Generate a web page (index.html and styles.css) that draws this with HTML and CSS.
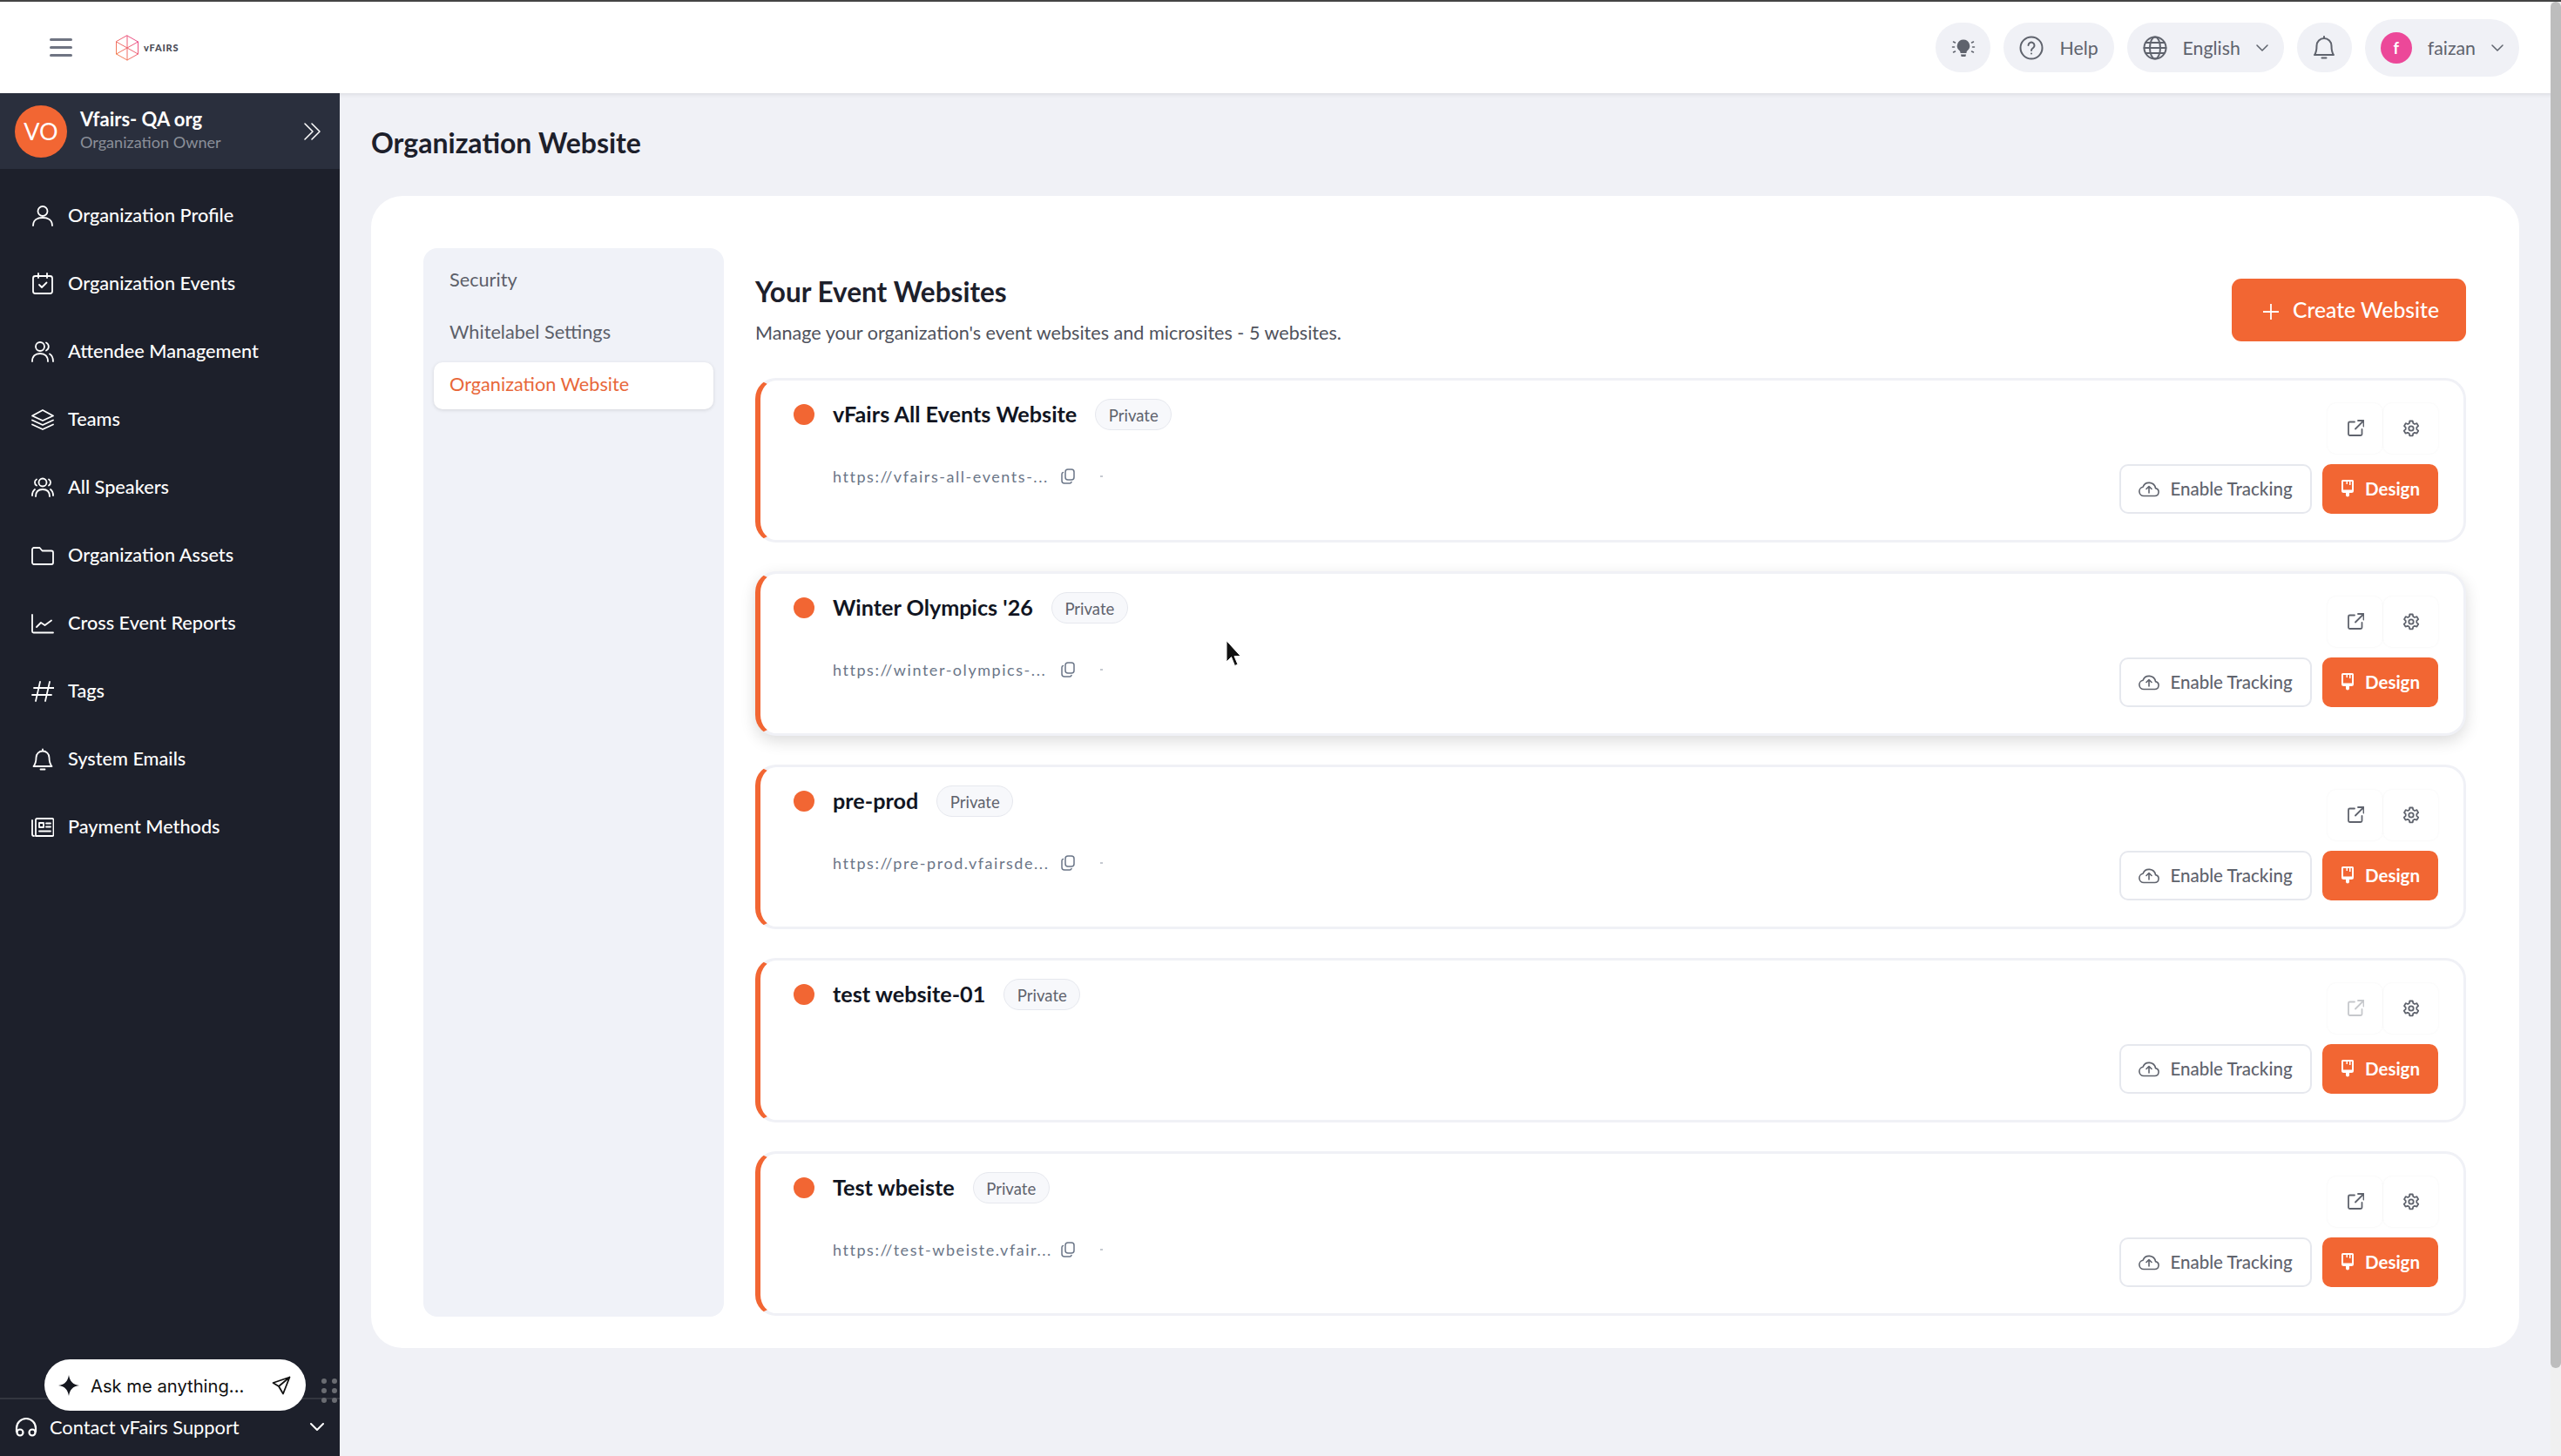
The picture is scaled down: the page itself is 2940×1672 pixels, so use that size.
FILE: index.html
```html
<!DOCTYPE html>
<html lang="en">
<head>
    <meta charset="UTF-8">
    <title>Organization Website</title>
    <link rel="stylesheet" href="styles.css">
</head>
<body>

<svg class="defs" width="0" height="0">
    <defs>
        <linearGradient id="logo-grad" x1="0" y1="1" x2="1" y2="0">
            <stop offset="0" stop-color="#f58a4b"/>
            <stop offset="1" stop-color="#e8428f"/>
        </linearGradient>
        <symbol id="i-external" viewBox="0 0 20 20">
            <path d="M9 2.500H3.500a1.500 1.500 0 0 0-1.500 1.500v12.500A1.500 1.500 0 0 0 3.500 18H16a1.500 1.500 0 0 0 1.500-1.500V11M10 10.500 19 1.500M13 1h6.500v6.500"/>
        </symbol>
        <symbol id="i-gear" viewBox="0 0 20 20">
            <path d="M8.300 1.500h3.400l.6 2.500 1.700 1 2.500-.8 1.700 2.900-1.900 1.800v2l1.900 1.800-1.700 2.900-2.500-.8-1.700 1-.6 2.500H8.300l-.6-2.500-1.700-1-2.500.8-1.700-2.900 1.900-1.800v-2L2 7.100l1.700-2.900 2.500.8 1.700-1z"/>
            <circle cx="10" cy="10" r="2.700"/>
        </symbol>
        <symbol id="i-cloud" viewBox="0 0 24 20">
            <path d="M6 18.500h12.500a4.500 4.500 0 0 0 1-8.900 7.500 7.500 0 0 0-14.400-1.400A5.200 5.200 0 0 0 6 18.500zM12 15V8M9 10.500 12 7.500l3 3"/>
        </symbol>
        <symbol id="i-brush" viewBox="0 0 16 20">
            <path fill-rule="evenodd" d="M2.500 0h11A1.500 1.500 0 0 1 15 1.500v11a2.500 2.500 0 0 1-2.500 2.500H10v2.500a2 2 0 0 1-4 0V15H3.500A2.500 2.500 0 0 1 1 12.500v-11A1.500 1.500 0 0 1 2.500 0zM3 2v9.500h10V2h-1.500v4h-1.500V2H8v3H6.500V2z"/>
        </symbol>
        <symbol id="i-copy" viewBox="0 0 16 18">
            <rect x="5" y="1" width="10" height="12" rx="3"/>
            <path d="M2.500 4.500A2 2 0 0 0 1 6.500V14a3 3 0 0 0 3 3h6a2 2 0 0 0 2-1.500"/>
        </symbol>
    </defs>
</svg>

<header class="topbar">
    <svg class="burger" viewBox="0 0 26 23">
        <path d="M1.500 2.500h23M1.500 11.500h23M1.500 20.500h23"/>
    </svg>
    <div class="logo">
        <svg viewBox="0 0 28 30" class="logo-mark">
            <path d="M14 1 26.500 8v14L14 29 1.500 22V8zM1.500 8 26.500 22M26.500 8 1.500 22M14 1v28"/>
        </svg>
        <span class="logo-text">vFAIRS</span>
    </div>
    <div class="top-actions">
        <div class="pill pill-round">
            <svg class="pill-icon" viewBox="0 0 28 28">
                <path class="solid" d="M14 4.500a7.200 7.200 0 0 0-4.500 12.800c.8.700 1 1.500 1 2.700h7c0-1.200.2-2 1-2.700A7.200 7.200 0 0 0 14 4.500zM11 21.500h6l-.6 2.500h-4.800z"/>
                <path d="M2.500 7l2 1M25.500 7l-2 1M1.500 13h2M26.500 13h-2M2.500 19l2-1M25.500 19l-2-1" class="dash"/>
            </svg>
        </div>
        <div class="pill">
            <svg class="pill-icon" viewBox="0 0 28 28">
                <circle cx="14" cy="14" r="12.500"/>
                <path d="M10.500 11a3.500 3.500 0 1 1 5.500 3c-1.300.9-2 1.500-2 3"/>
                <circle class="solid" cx="14" cy="20.500" r="1"/>
            </svg>
            <span>Help</span>
        </div>
        <div class="pill">
            <svg class="pill-icon" viewBox="0 0 28 28">
                <circle cx="14" cy="14" r="12.500"/>
                <ellipse cx="14" cy="14" rx="6" ry="12.500"/>
                <path d="M1.500 14h25M3.500 8h21M3.500 20h21"/>
            </svg>
            <span>English</span>
            <svg class="pill-caret" viewBox="0 0 14 8"><path d="M1 1l6 6 6-6"/></svg>
        </div>
        <div class="pill pill-round">
            <svg class="pill-icon" viewBox="0 0 28 28">
                <path d="M14 3a8.500 8.500 0 0 0-8.500 8.500c0 5.500-.5 8-2.500 10.500h22c-2-2.500-2.500-5-2.500-10.500A8.500 8.500 0 0 0 14 3zM14 3V1M11.500 25.500h5"/>
            </svg>
        </div>
        <div class="pill pill-user">
            <div class="user-avatar">f</div>
            <span>faizan</span>
            <svg class="pill-caret" viewBox="0 0 14 8"><path d="M1 1l6 6 6-6"/></svg>
        </div>
    </div>
</header>

<div class="layout">
    <aside class="sidebar">
        <div class="org">
            <div class="org-avatar">VO</div>
            <div class="org-info">
                <div class="org-name">Vfairs- QA org</div>
                <div class="org-role">Organization Owner</div>
            </div>
            <svg class="org-toggle" viewBox="0 0 19 20"><path d="M1 1l9 9-9 9M9 1l9 9-9 9"/></svg>
        </div>

        <ul class="nav">
            <li>
                <svg viewBox="0 0 26 26"><circle cx="13" cy="7.500" r="5.500"/><path d="M2 24c0-6 4.500-9 11-9s11 3 11 9"/></svg>
                Organization Profile
            </li>
            <li>
                <svg viewBox="0 0 26 26"><rect x="2" y="4" width="22" height="20" rx="2.500"/><path d="M8 1v5M18 1v5M9 14l3 3 5.500-5.500"/></svg>
                Organization Events
            </li>
            <li>
                <svg viewBox="0 0 26 26"><circle cx="10" cy="7" r="5"/><path d="M1 24c0-6 3.500-9 9-9s9 3 9 9M17 2.500a5 5 0 0 1 0 9M21 15.500c2.500 1.500 4 4.500 4 8.500"/></svg>
                Attendee Management
            </li>
            <li>
                <svg viewBox="0 0 26 26"><path d="M13 2 25 8.500 13 14 1 8.500zM1 13.500 13 19l12-5.500M1 18.500 13 24l12-5.500"/></svg>
                Teams
            </li>
            <li>
                <svg viewBox="0 0 26 26"><circle cx="13" cy="7" r="4.500"/><path d="M5 23c0-5 3-8 8-8s8 3 8 8M6 3.500a4 4 0 0 0 0 7M20 3.500a4 4 0 0 1 0 7M1 22c0-3 1-5.500 3-7M25 22c0-3-1-5.500-3-7"/></svg>
                All Speakers
            </li>
            <li>
                <svg viewBox="0 0 26 26"><path d="M1 6a2 2 0 0 1 2-2h6.500l3 3.500H23a2 2 0 0 1 2 2V21a2 2 0 0 1-2 2H3a2 2 0 0 1-2-2z"/></svg>
                Organization Assets
            </li>
            <li>
                <svg viewBox="0 0 26 26"><path d="M1 3v19a1.500 1.500 0 0 0 1.500 1.500H25M6 17l5-5 4.500 3L23 9.500"/></svg>
                Cross Event Reports
            </li>
            <li>
                <svg viewBox="0 0 26 26"><path d="M10 2 5 24M21 2l-5 22M3 9h23M1 17h22"/></svg>
                Tags
            </li>
            <li>
                <svg viewBox="0 0 26 26"><path d="M13 3.500a7.500 7.500 0 0 0-7.500 7.500c0 5-1 7.500-3 10h21c-2-2.500-3-5-3-10A7.500 7.500 0 0 0 13 3.500zM13 3.500V1.500M10.500 24.500h5"/></svg>
                System Emails
            </li>
            <li>
                <svg viewBox="0 0 26 26"><path d="M1 5v16a2 2 0 0 0 2 2M5 23h19a1.500 1.500 0 0 0 1.500-1.500V4.500A1.500 1.500 0 0 0 24 3H6.500A1.500 1.500 0 0 0 5 4.500zM9 8h5v5H9zM17 8.500h5M17 12.500h5M9 17.500h13"/></svg>
                Payment Methods
            </li>
        </ul>

        <div class="support">
            <svg class="support-icon" viewBox="0 0 26 24"><path d="M2 17v-4a11 11 0 0 1 22 0v4"/><circle cx="6" cy="18" r="3.500"/><circle cx="20" cy="18" r="3.500"/></svg>
            <span>Contact vFairs Support</span>
            <svg class="support-caret" viewBox="0 0 16 10"><path d="M1 1l7 7 7-7"/></svg>
        </div>

        <div class="ask">
            <svg class="ask-star" viewBox="0 0 24 24"><path d="M12 0c1.200 7.500 4.500 10.800 12 12-7.500 1.200-10.800 4.500-12 12-1.200-7.500-4.500-10.800-12-12 7.500-1.200 10.800-4.500 12-12z"/></svg>
            <span>Ask me anything...</span>
            <svg class="ask-send" viewBox="0 0 22 22"><path d="M20.500 1.500 1.500 8l6.500 4 5 8.500zM8 12l12.500-10.500"/></svg>
        </div>
        <div class="ask-grip">
            <i></i><i></i><i></i><i></i><i></i><i></i>
        </div>
    </aside>

    <main class="main">
        <h1 class="page-title">Organization Website</h1>
        <section class="panel">
            <ul class="subnav">
                <li>Security</li>
                <li>Whitelabel Settings</li>
                <li class="active">Organization Website</li>
            </ul>
            <div class="content">
                <div class="content-head">
                    <div>
                        <h2>Your Event Websites</h2>
                        <p>Manage your organization's event websites and microsites - 5 websites.</p>
                    </div>
                    <button class="btn-create">
                        <svg viewBox="0 0 18 18"><path d="M9 0v18M0 9h18"/></svg>
                        Create Website
                    </button>
                </div>

                <div class="card">
                    <div class="card-left">
                        <div class="card-title">
                            <span class="dot"></span>
                            <h3>vFairs All Events Website</h3>
                            <span class="badge">Private</span>
                        </div>
                        <div class="card-url">
                            <span class="url-text">https://vfairs-all-events-...</span>
                            <svg class="copy"><use href="#i-copy"/></svg>
                            <span class="url-dot"></span>
                        </div>
                    </div>
                    <div class="card-right">
                        <div class="icon-row">
                            <span class="icon-btn"><svg><use href="#i-external"/></svg></span>
                            <span class="icon-btn"><svg><use href="#i-gear"/></svg></span>
                        </div>
                        <div class="btn-row">
                            <button class="btn-track"><svg><use href="#i-cloud"/></svg>Enable Tracking</button>
                            <button class="btn-design"><svg><use href="#i-brush"/></svg>Design</button>
                        </div>
                    </div>
                </div>

                <div class="card card-hover">
                    <div class="card-left">
                        <div class="card-title">
                            <span class="dot"></span>
                            <h3>Winter Olympics '26</h3>
                            <span class="badge">Private</span>
                        </div>
                        <div class="card-url">
                            <span class="url-text">https://winter-olympics-...</span>
                            <svg class="copy"><use href="#i-copy"/></svg>
                            <span class="url-dot"></span>
                        </div>
                    </div>
                    <div class="card-right">
                        <div class="icon-row">
                            <span class="icon-btn"><svg><use href="#i-external"/></svg></span>
                            <span class="icon-btn"><svg><use href="#i-gear"/></svg></span>
                        </div>
                        <div class="btn-row">
                            <button class="btn-track"><svg><use href="#i-cloud"/></svg>Enable Tracking</button>
                            <button class="btn-design"><svg><use href="#i-brush"/></svg>Design</button>
                        </div>
                    </div>
                </div>

                <div class="card">
                    <div class="card-left">
                        <div class="card-title">
                            <span class="dot"></span>
                            <h3>pre-prod</h3>
                            <span class="badge">Private</span>
                        </div>
                        <div class="card-url">
                            <span class="url-text">https://pre-prod.vfairsde...</span>
                            <svg class="copy"><use href="#i-copy"/></svg>
                            <span class="url-dot"></span>
                        </div>
                    </div>
                    <div class="card-right">
                        <div class="icon-row">
                            <span class="icon-btn"><svg><use href="#i-external"/></svg></span>
                            <span class="icon-btn"><svg><use href="#i-gear"/></svg></span>
                        </div>
                        <div class="btn-row">
                            <button class="btn-track"><svg><use href="#i-cloud"/></svg>Enable Tracking</button>
                            <button class="btn-design"><svg><use href="#i-brush"/></svg>Design</button>
                        </div>
                    </div>
                </div>

                <div class="card">
                    <div class="card-left">
                        <div class="card-title">
                            <span class="dot"></span>
                            <h3>test website-01</h3>
                            <span class="badge">Private</span>
                        </div>
                    </div>
                    <div class="card-right">
                        <div class="icon-row">
                            <span class="icon-btn disabled"><svg><use href="#i-external"/></svg></span>
                            <span class="icon-btn"><svg><use href="#i-gear"/></svg></span>
                        </div>
                        <div class="btn-row">
                            <button class="btn-track"><svg><use href="#i-cloud"/></svg>Enable Tracking</button>
                            <button class="btn-design"><svg><use href="#i-brush"/></svg>Design</button>
                        </div>
                    </div>
                </div>

                <div class="card">
                    <div class="card-left">
                        <div class="card-title">
                            <span class="dot"></span>
                            <h3>Test wbeiste</h3>
                            <span class="badge">Private</span>
                        </div>
                        <div class="card-url">
                            <span class="url-text">https://test-wbeiste.vfair...</span>
                            <svg class="copy"><use href="#i-copy"/></svg>
                            <span class="url-dot"></span>
                        </div>
                    </div>
                    <div class="card-right">
                        <div class="icon-row">
                            <span class="icon-btn"><svg><use href="#i-external"/></svg></span>
                            <span class="icon-btn"><svg><use href="#i-gear"/></svg></span>
                        </div>
                        <div class="btn-row">
                            <button class="btn-track"><svg><use href="#i-cloud"/></svg>Enable Tracking</button>
                            <button class="btn-design"><svg><use href="#i-brush"/></svg>Design</button>
                        </div>
                    </div>
                </div>
            </div>
        </section>
    </main>
</div>

<div class="scroll-track"></div>
<div class="scroll-thumb"></div>

<svg class="cursor" viewBox="0 0 17 32">
    <path d="M1 1v24l5.500-5.500 4 10 3.500-1.500-4-9.500h7z"/>
</svg>

</body>
</html>
```

FILE: styles.css
```css
* {
    margin: 0;
    padding: 0;
    box-sizing: border-box;
}

ul {
    list-style: none;
}

html, body {
    height: 100%;
}

body {
    width: 2940px;
    height: 1672px;
    overflow: hidden;
    position: relative;
    background: #f0f1f6;
    font-family: "Lato", "Open Sans", sans-serif;
    color: #1d202b;
}

svg {
    fill: none;
    stroke: currentColor;
    stroke-linecap: round;
    stroke-linejoin: round;
    display: block;
    flex: none;
}

button {
    font-family: "Lato", sans-serif;
    border: none;
    cursor: pointer;
}

.defs {
    position: absolute;
}

/* top bar */
.topbar {
    height: 107px;
    border-top: 2px solid #444;
    background: #fff;
    display: flex;
    align-items: center;
    padding: 0 48px 0 57px;
    box-shadow: 0 2px 5px rgba(0, 0, 0, .08);
    position: relative;
    z-index: 1;
}

.burger {
    width: 26px;
    height: 23px;
    color: #6f7482;
    stroke-width: 3;
}

.logo {
    margin-left: 49px;
    display: flex;
    align-items: center;
    gap: 5px;
}

.logo-mark {
    width: 28px;
    height: 30px;
    stroke: url(#logo-grad);
    stroke-width: 1;
}

.logo-text {
    font-size: 11px;
    font-weight: 900;
    letter-spacing: .8px;
    color: #4a4d57;
}

.top-actions {
    margin-left: auto;
    display: flex;
    align-items: center;
    gap: 15px;
}

.pill {
    height: 57px;
    border-radius: 29px;
    background: #f0f1f6;
    display: flex;
    align-items: center;
    gap: 18px;
    padding: 0 18px;
    font-size: 21.300px;
    color: #5f636d;
}

.pill-round {
    width: 63px;
    justify-content: center;
    padding: 0;
}

.pill-icon {
    width: 28px;
    height: 28px;
    stroke-width: 2;
}

.solid {
    fill: currentColor;
    stroke: none;
}

.dash {
    stroke-width: 1.500;
}

.pill-caret {
    width: 14px;
    height: 8px;
    stroke-width: 1.500;
}

.pill-user {
    height: 66px;
    border-radius: 33px;
}

.user-avatar {
    width: 36px;
    height: 36px;
    border-radius: 50%;
    background: #ec4899;
    color: #fff;
    font-size: 18px;
    font-weight: 700;
    text-align: center;
    line-height: 36px;
}

/* sidebar */
.layout {
    display: flex;
    height: 1565px;
}

.sidebar {
    width: 390px;
    background: #1d202b;
    color: #fff;
    display: flex;
    flex-direction: column;
    position: relative;
    z-index: 2;
}

.org {
    height: 87px;
    background: #2a2f3d;
    display: flex;
    align-items: center;
    padding: 0 22px 0 17px;
    gap: 15px;
}

.org-avatar {
    width: 60px;
    height: 60px;
    border-radius: 50%;
    background: #f26633;
    font-size: 27px;
    text-align: center;
    line-height: 60px;
}

.org-info {
    margin-top: -2px;
}

.org-name {
    font-size: 22px;
    font-weight: 700;
    line-height: 26px;
}

.org-role {
    font-size: 18.100px;
    line-height: 26px;
    color: #8b8f99;
}

.org-toggle {
    width: 19px;
    height: 20px;
    margin-left: auto;
    stroke-width: 1.500;
}

.nav {
    padding-top: 15px;
}

.nav li {
    height: 78px;
    display: flex;
    align-items: center;
    gap: 16px;
    padding-left: 36px;
    padding-bottom: 2px;
    font-size: 21.700px;
    font-weight: 500;
}

.nav svg {
    width: 26px;
    height: 26px;
    stroke-width: 1.800;
    margin-top: 2px;
}

.support {
    margin-top: auto;
    height: 67px;
    border-top: 2px solid #33363f;
    display: flex;
    align-items: center;
    padding: 0 18px 2px 17px;
    font-size: 21.800px;
}

.support-icon {
    width: 26px;
    height: 24px;
    stroke-width: 2.200;
    margin-right: 14px;
}

.support-caret {
    width: 16px;
    height: 10px;
    margin-left: auto;
    stroke-width: 2;
}

.ask {
    position: absolute;
    left: 51px;
    top: 1454px;
    width: 300px;
    height: 59px;
    border-radius: 30px;
    background: #fff;
    color: #111;
    display: flex;
    align-items: center;
    padding: 0 17px 0 16px;
    font-family: "Inter", sans-serif;
    font-size: 20.200px;
}

.ask span {
    padding-top: 2px;
}

.ask-star {
    width: 24px;
    height: 24px;
    fill: #15171f;
    stroke: none;
    margin-right: 13px;
}

.ask-send {
    width: 22px;
    height: 22px;
    margin-left: auto;
    stroke-width: 1.800;
}

.ask-grip {
    position: absolute;
    left: 369px;
    top: 1476px;
    display: grid;
    grid-template-columns: 6px 6px;
    gap: 5px 6px;
}

.ask-grip i {
    width: 6px;
    height: 6px;
    border-radius: 50%;
    background: #6a6c72;
}

/* main */
.main {
    flex: 1;
    padding: 37px 48px 0 36px;
}

.page-title {
    font-size: 32px;
    font-weight: 700;
    line-height: 40px;
    color: #1d202b;
}

.panel {
    margin-top: 41px;
    height: 1323px;
    background: #fff;
    border-radius: 36px;
    padding: 60px 61px 36px 60px;
    display: flex;
    gap: 36px;
}

.subnav {
    width: 345px;
    background: #f0f2f8;
    border-radius: 16px;
    padding: 6px 12px;
    font-size: 21.700px;
    color: #5c5f69;
}

.subnav li {
    height: 60px;
    line-height: 60px;
    padding-left: 18px;
}

.subnav .active {
    height: 54px;
    line-height: 50px;
    margin-top: 5px;
    background: #fff;
    border-radius: 10px;
    color: #e8673a;
    box-shadow: 0 1px 4px rgba(0, 0, 0, .12);
}

.content {
    flex: 1;
    padding-top: 33px;
}

.content-head {
    display: flex;
    justify-content: space-between;
    align-items: flex-start;
    height: 116px;
}

.content-head h2 {
    font-size: 31.500px;
    font-weight: 700;
    line-height: 34px;
    color: #1d202b;
}

.content-head p {
    margin-top: 16px;
    font-size: 21.600px;
    line-height: 28px;
    color: #4f525c;
}

.btn-create {
    margin-top: 2px;
    width: 269px;
    height: 72px;
    padding: 0 0 2px 5px;
    background: #f26633;
    color: #fff;
    border-radius: 11px;
    font-size: 24.700px;
    font-weight: 500;
    display: flex;
    align-items: center;
    justify-content: center;
    gap: 16px;
}

.btn-create svg {
    width: 18px;
    height: 18px;
    stroke-width: 1.800;
    margin-top: 6px;
}

/* cards */
.card {
    height: 189px;
    margin-bottom: 33px;
    border: 3px solid #f0f1f6;
    border-left: 6px solid #f26633;
    border-radius: 24px;
    padding: 21px 29px 0 38px;
    display: flex;
    justify-content: space-between;
    background: #fff;
}

.card:last-child {
    margin-bottom: 0;
}

.card-hover {
    box-shadow: 0 6px 18px rgba(0, 0, 0, .14);
}

.card-title {
    display: flex;
    align-items: center;
    height: 36px;
}

.dot {
    width: 24px;
    height: 24px;
    border-radius: 50%;
    background: #f26633;
    margin-right: 21px;
    margin-top: -1px;
}

.card-title h3 {
    font-size: 25.200px;
    font-weight: 700;
    color: #111522;
    margin-top: -2px;
}

.badge {
    margin-left: 21px;
    height: 36px;
    width: 88px;
    border: 1px solid #e6e8ee;
    border-radius: 18px;
    background: #f7f8fb;
    font-size: 18.500px;
    line-height: 36px;
    text-align: center;
    color: #5f636d;
}

.card-url {
    margin-top: 41px;
    margin-left: 45px;
    height: 24px;
    display: flex;
    align-items: center;
    color: #6b7688;
}

.url-text {
    width: 262px;
    font-size: 18px;
    letter-spacing: 1.550px;
    white-space: nowrap;
}

.copy {
    width: 16px;
    height: 18px;
    stroke-width: 1.500;
}

.url-dot {
    width: 3px;
    height: 2px;
    margin-left: 29px;
    background: #c5c9d0;
}

.card-right {
    padding-top: 5px;
    display: flex;
    flex-direction: column;
    align-items: flex-end;
    gap: 12px;
}

.icon-row {
    display: flex;
    gap: 1px;
}

.icon-btn {
    width: 63px;
    height: 58px;
    border-radius: 10px;
    box-shadow: 0 0 3px rgba(0, 0, 0, .05);
    display: flex;
    align-items: center;
    justify-content: center;
    color: #5f636d;
}

.icon-btn svg {
    width: 20px;
    height: 20px;
    stroke-width: 1.800;
}

.icon-btn.disabled {
    color: #c6c8cc;
}

.btn-row {
    display: flex;
    gap: 12px;
}

.btn-track, .btn-design {
    height: 57px;
    padding-bottom: 2px;
    border-radius: 10px;
    font-size: 20.500px;
    display: flex;
    align-items: center;
    justify-content: center;
}

.btn-track {
    width: 221px;
    background: #fff;
    border: 2px solid #e6e8ee;
    color: #5f636d;
    gap: 12px;
    font-weight: 500;
}

.btn-track svg {
    width: 24px;
    height: 20px;
    stroke-width: 1.600;
}

.btn-design {
    width: 133px;
    background: #f26633;
    color: #fff;
    gap: 12px;
    font-weight: 700;
}

.btn-design svg {
    width: 16px;
    height: 20px;
    fill: #fff;
    stroke: none;
}

/* fake scrollbar and mouse pointer from the recording */
.scroll-track {
    position: absolute;
    right: 0;
    top: 2px;
    bottom: 0;
    width: 12px;
    background: #f0f0f0;
    z-index: 3;
}

.scroll-thumb {
    position: absolute;
    right: 0;
    top: 2px;
    width: 12px;
    height: 1569px;
    background: #bdbdbd;
    border-radius: 6px;
    z-index: 3;
}

.cursor {
    position: absolute;
    left: 1407px;
    top: 735px;
    width: 17px;
    height: 32px;
    fill: #111;
    stroke: #fff;
    stroke-width: 1;
    z-index: 4;
}
```
